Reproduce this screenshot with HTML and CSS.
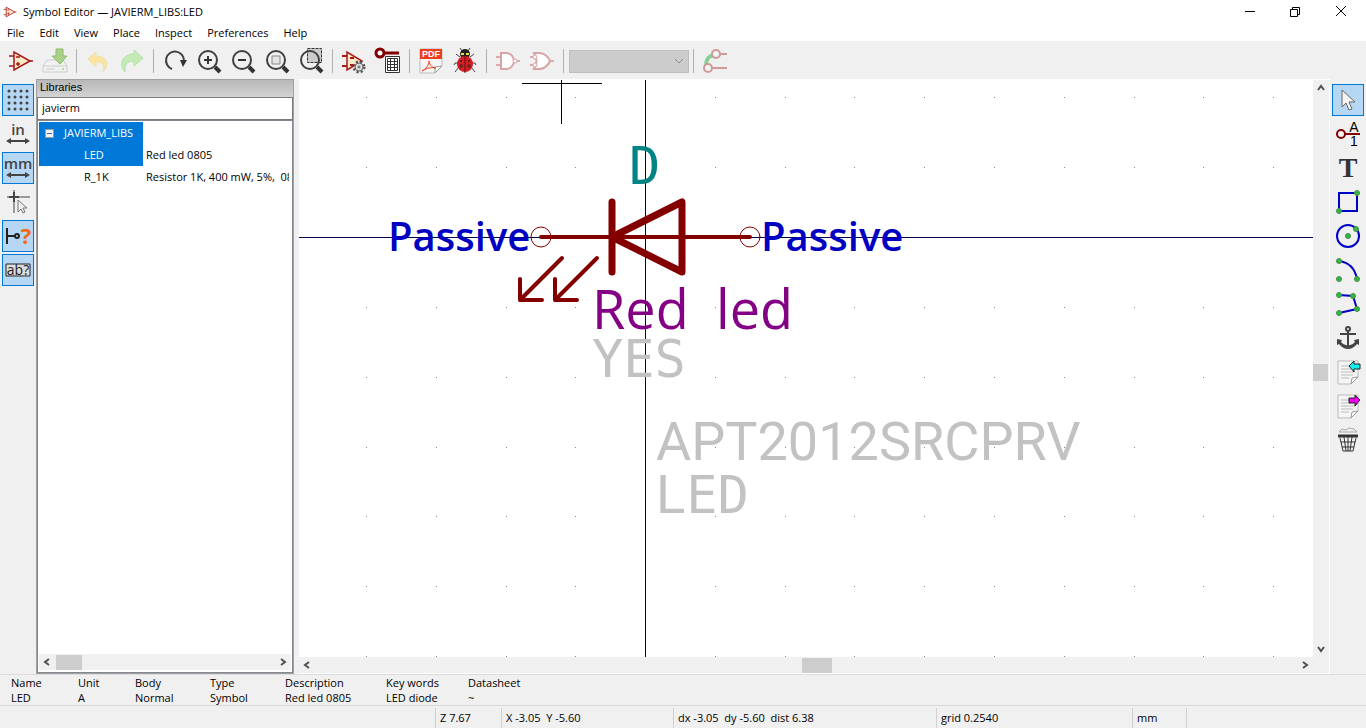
FILE: index.html
```
<!DOCTYPE html>
<html lang="en">
<head>
<meta charset="utf-8">
<title>Symbol Editor — JAVIERM_LIBS:LED</title>
<link rel="stylesheet" href="styles.css">
</head>
<body>
<svg class="defs" aria-hidden="true">
  <defs>
    <symbol id="opamp" viewBox="0 0 26 26"><path d="M6 4v18l16-9z" fill="#fbe9c8" stroke="#a81818" stroke-width="1.500"/><path d="M1 8h5M1 18h5M21 13h4M8 9h4M8 16h4M10 14v4" stroke="#a81818" stroke-width="1.500" fill="none"/></symbol>
    <symbol id="glass" viewBox="0 0 26 26"><circle cx="12" cy="12" r="9" fill="none" stroke="#404040" stroke-width="2"/><path d="M19 19l5 5" stroke="#333" stroke-width="4"/></symbol>
    <symbol id="undo" viewBox="0 0 26 26"><path d="M3 11l8-7v4c11 0 14 9 7 16 2-7 0-10-7-10v5z" fill="#fbe3a0" stroke="#f0dfae"/></symbol>
    <symbol id="up" viewBox="0 0 16 16"><path d="M5 10l3-4 3 4" fill="none" stroke="#505050" stroke-width="2"/></symbol>
    <symbol id="page" viewBox="0 0 26 26"><path d="M3 2h20v16l-7 7H3z" fill="#f5f5f5" stroke="#bbb"/><path d="M23 18l-7 7 1-6z" fill="#fff" stroke="#999"/><path d="M6 7h10M6 10h10M6 13h14M6 16h12M6 19h8" stroke="#bbb"/></symbol>
  </defs>
</svg>
<div class="window">
  <header class="titlebar">
    <svg class="app-icon"><use href="#opamp"/></svg>
    <span class="title">Symbol Editor — JAVIERM_LIBS:LED</span>
    <button class="win-btn" aria-label="Minimize"><svg width="12" height="12"><path d="M1 5h10v1H1z"/></svg></button>
    <button class="win-btn" aria-label="Restore"><svg width="12" height="12"><path d="M.5 3.500h7v7h-7zM2.500 3.500v-2h7v7h-2" fill="none" stroke="#000"/></svg></button>
    <button class="win-btn" aria-label="Close"><svg width="12" height="12"><path d="M0 0l10 10M10 0L0 10" fill="none" stroke="#000"/></svg></button>
  </header>
  <nav class="menubar">
    <button>File</button><button>Edit</button><button>View</button><button>Place</button><button>Inspect</button><button>Preferences</button><button>Help</button>
  </nav>
  <div class="toolbar" role="toolbar">
    <button aria-label="New symbol"><svg><use href="#opamp"/></svg></button>
    <button aria-label="Save"><svg viewBox="0 0 26 26"><path d="M5 12h16l4 6v6H1v-6z" fill="#f1f1f1" stroke="#ccc"/><path d="M1 18h24" stroke="#ccc"/><circle cx="21" cy="21" r="1" fill="#9d8"/><path d="M4 21h9" stroke="#ccc"/><path d="M14 1h7v7h4l-7 8-8-8h4z" fill="#a8d087" stroke="#8fbb70"/></svg></button>
    <span class="sep"></span>
    <button aria-label="Undo"><svg><use href="#undo"/></svg></button>
    <button aria-label="Redo"><svg viewBox="0 0 26 26"><path d="M24 10l-9-8v4C4 6-1 16 6 24c-1-7 2-11 9-11v5z" fill="#c4ebb5" stroke="#b5dfa8"/></svg></button>
    <span class="sep"></span>
    <button aria-label="Refresh"><svg viewBox="0 0 26 26"><path d="M10 21a9 9 0 1 1 12-8" fill="none" stroke="#404040" stroke-width="2"/><path d="M18 12h7l-4 7z" fill="#333"/></svg></button>
    <button aria-label="Zoom in"><svg viewBox="0 0 26 26"><use href="#glass"/><path d="M8 12h8M12 8v8" stroke="#333" stroke-width="2"/></svg></button>
    <button aria-label="Zoom out"><svg viewBox="0 0 26 26"><use href="#glass"/><path d="M8 12h8" stroke="#333" stroke-width="2"/></svg></button>
    <button aria-label="Zoom to fit"><svg viewBox="0 0 26 26"><use href="#glass"/><path d="M8 8h8v8H8z" fill="#e5e5e5" stroke="#888" stroke-width="1"/></svg></button>
    <button aria-label="Zoom to selection"><svg viewBox="0 0 26 26"><path d="M9.500 .5h14v14h-14z" fill="#ccc" stroke="#333" stroke-dasharray="3 1"/><use href="#glass"/></svg></button>
    <span class="sep"></span>
    <button aria-label="Symbol properties"><svg viewBox="0 0 26 26"><path d="M6 4v18l15-9z" fill="#fbe9c8" stroke="#a81818" stroke-width="1.500"/><path d="M1 8h5M1 18h5M9 10h4M9 17h4" stroke="#a81818" stroke-width="2"/><circle cx="18" cy="19" r="5" fill="#ddd" stroke="#555" stroke-width="3" stroke-dasharray="2 2"/><circle cx="18" cy="19" r="4" fill="#ddd" stroke="#666"/><circle cx="18" cy="19" r="1" fill="#fff" stroke="#555"/></svg></button>
    <button aria-label="Pin table"><svg viewBox="0 0 26 26"><path d="M9 5h15" stroke="#840000" stroke-width="3"/><circle cx="5" cy="5" r="4" fill="#fff" stroke="#840000" stroke-width="3"/><path d="M10.500 8.500h14v16h-14z" fill="#fff" stroke="#333"/><path d="M12.500 10.500h10v12h-10zM12.500 13.500h10M12.500 16.500h10M12.500 19.500h10M15.500 11v12M19.500 11v12" fill="none" stroke="#333"/></svg></button>
    <span class="sep"></span>
    <button aria-label="Datasheet"><svg viewBox="0 0 26 26"><path d="M2 1h22v17l-7 7H2z" fill="#f6f6f6" stroke="#bbb"/><path d="M2 1h22v10H2z" fill="#ec3d1d"/><path d="M24 18l-7 7v-6z" fill="#fff" stroke="#999"/><path d="M4 23c4-2 7-6 7-10 1 5 4 7 7 7-5-1-9 0-14 3z" fill="none" stroke="#ec3d1d"/><text class="pdf" x="13" y="9">PDF</text></svg></button>
    <button aria-label="Check symbol"><svg viewBox="0 0 26 26"><path d="M10 3L8 0M16 3l2-3M8 9L4 6M18 9l4-3M6 15H3l-1 2M20 15h3l1 2M7 19l-4 5M19 19l4 5" stroke="#444" fill="none"/><ellipse cx="13" cy="6" rx="5" ry="5" fill="#222"/><path d="M9 6h3M14 6h3" stroke="#ed4" stroke-width="2"/><ellipse cx="13" cy="16" rx="8" ry="8" fill="#d21f24"/><path d="M13 8v17" stroke="#611"/><circle cx="9" cy="13" r="1" fill="#322"/><circle cx="17" cy="13" r="1" fill="#322"/><circle cx="9" cy="18" r="2" fill="#722"/><circle cx="17" cy="18" r="2" fill="#722"/></svg></button>
    <span class="sep"></span>
    <button aria-label="Standard body style"><svg viewBox="0 0 26 26"><path d="M1 9h5M1 17h5M22 13h3" stroke="#dcaaaa" stroke-width="2"/><path d="M6 5h5a8 8 0 0 1 0 16H6z" fill="#fff" stroke="#d8a4a4" stroke-width="2"/><circle cx="20" cy="13" r="2" fill="#fff" stroke="#d8a4a4"/></svg></button>
    <button aria-label="Alternate body style"><svg viewBox="0 0 26 26"><path d="M1 9h3M1 17h3M21 13h4" stroke="#dcaaaa" stroke-width="2"/><path d="M5 5h6q7 1 10 8-3 7-10 8H5q5-8 0-16z" fill="#fff" stroke="#d8a4a4" stroke-width="2"/><circle cx="6" cy="9" r="2" fill="#fff" stroke="#d8a4a4"/><circle cx="6" cy="17" r="2" fill="#fff" stroke="#d8a4a4"/></svg></button>
    <span class="sep"></span>
    <select class="unit" aria-label="Unit" disabled><option></option></select>
    <svg class="unit-arrow" viewBox="0 0 12 12"><path d="M2 4l4 4 4-4" fill="none" stroke="#909090"/></svg>
    <span class="sep"></span>
    <button aria-label="Synchronized pins"><svg viewBox="0 0 26 26"><path d="M4 18c0-7 2-10 8-11" fill="none" stroke="#86cf96" stroke-width="4"/><path d="M17 6h8M9 20h16" stroke="#d09898" stroke-width="2"/><circle cx="14" cy="6" r="4" fill="#f4f4f4" stroke="#d09898" stroke-width="2"/><circle cx="6" cy="20" r="4" fill="#f4f4f4" stroke="#d09898" stroke-width="2"/></svg></button>
  </div>

  <main class="main">
    <div class="side" role="toolbar">
      <button class="on" aria-label="Show grid"><svg viewBox="0 0 26 26"><path d="M4 4h19M4 10h19M4 16h19M4 22h19" stroke="#444" stroke-width="3" stroke-linecap="round" stroke-dasharray="0 6"/></svg></button>
      <button aria-label="Inches"><svg viewBox="0 0 26 26"><text class="glyph" x="13" y="14">in</text><path d="M3 20h20" stroke="#444" stroke-width="2"/><path d="M1 20l5-3v6zM25 20l-5-3v6z" fill="#444"/></svg></button>
      <button class="on" aria-label="Millimetres"><svg viewBox="0 0 26 26"><text class="glyph" x="13" y="14">mm</text><path d="M3 20h20" stroke="#444" stroke-width="2"/><path d="M1 20l5-3v6zM25 20l-5-3v6z" fill="#444"/></svg></button>
      <button aria-label="Cursor shape"><svg viewBox="0 0 26 26"><path d="M2 8h23M9 1v24" stroke="#999" stroke-width="2" stroke-dasharray="11 1"/><path d="M4 8h10M9 3v10" stroke="#444" stroke-width="2"/><path d="M13 11v12l3-3 2 4 2-1-2-4h4z" fill="#eee" stroke="#777"/></svg></button>
      <button class="on" aria-label="Pin electrical type"><svg viewBox="0 0 26 26"><path d="M2 5v16M2 13h8" stroke="#222" stroke-width="2"/><circle cx="12" cy="13" r="2" fill="#b5d7f3" stroke="#222" stroke-width="2"/><text class="question" x="21" y="21">?</text></svg></button>
      <button class="on" aria-label="Hidden text"><svg viewBox="0 0 26 26"><path d="M1 7h24v12H1z" fill="#ddd" stroke="#222" stroke-width="1"/><text class="abc" x="13" y="18">ab?</text></svg></button>
    </div>

    <section class="panel">
      <h2 class="caption">Libraries</h2>
      <input class="search" type="text" value="javierm" aria-label="Search libraries">
      <div class="tree">
        <div class="rows">
          <div class="row sel root"><span class="name"><span class="toggle"></span>JAVIERM_LIBS</span></div>
          <div class="row sel"><span class="name">LED</span><span class="desc">Red led 0805</span></div>
          <div class="row"><span class="name">R_1K</span><span class="desc">Resistor 1K, 400 mW, 5%,&nbsp; 0805</span></div>
        </div>
        <div class="hscroll">
          <svg class="left"><use href="#up"/></svg><span class="thumb tree-thumb"></span><svg class="right"><use href="#up"/></svg>
        </div>
      </div>
    </section>

    <section class="editor">
      <svg class="sheet">
        <rect class="axis" x="346" y="0" width="1" height="100%"/>
        <rect class="axis" x="0" y="157" width="100%" height="1"/>
        <g transform="translate(346 157)">
          <path id="dots" class="dots" d="M-279 0h1v1h-1zM-209 0h1v1h-1zM-139 0h1v1h-1zM-70 0h1v1h-1zM70 0h1v1h-1zM140 0h1v1h-1zM209 0h1v1h-1zM279 0h1v1h-1zM349 0h1v1h-1zM419 0h1v1h-1zM489 0h1v1h-1zM558 0h1v1h-1zM628 0h1v1h-1z" transform="translate(0 -140)"/>
          <use href="#dots" y="70"/><use href="#dots" y="210"/><use href="#dots" y="280"/><use href="#dots" y="350"/><use href="#dots" y="419"/><use href="#dots" y="489"/><use href="#dots" y="559"/>
          <path class="cursor" d="M-123-154h80v1h-80zM-84-157h1v44h-1z"/>
          <g class="symbol">
            <path class="pin" d="M-104 0H105"/>
            <path class="body" d="M-33-35V35M37-35V35L-33 0z"/>
            <circle cx="-104" cy="0" r="10"/><circle cx="105" cy="0" r="10"/>
            <path class="pin" d="M-83 21L-125 63M-125 42V63H-103M-48 21L-90 63M-90 42V63H-68"/>
          </g>
          <text class="pin-type" x="-257" y="14">Passive</text>
          <text class="pin-type" x="116" y="14">Passive</text>
          <text class="field mono ref" x="-16" y="-53">D</text>
          <text class="field value" x="-53" y="92">Red <tspan x="71">led</tspan></text>
          <text class="field mono hidden-field" x="-53" y="140">YES</text>
          <text class="field part hidden-field" x="11" y="223">APT2012SRCPRV</text>
          <text class="field mono hidden-field" x="10" y="276">LED</text>
        </g>
      </svg>
      <div class="vscroll"><svg><use href="#up"/></svg><span class="thumb v-thumb"></span><svg class="down"><use href="#up"/></svg></div>
      <div class="hscroll"><svg class="left"><use href="#up"/></svg><span class="thumb sheet-thumb"></span><svg class="right"><use href="#up"/></svg></div>
      <div class="corner"></div>
    </section>

    <div class="side" role="toolbar">
      <button class="on" aria-label="Select"><svg viewBox="0 0 26 26"><path d="M7 3v17l4-4 3 7 3-1-3-7h6z" fill="#f4f4f4" stroke="#666"/></svg></button>
      <button aria-label="Add pin"><svg viewBox="0 0 26 26"><path d="M9 13h16" stroke="#840000" stroke-width="2"/><circle cx="6" cy="13" r="4" fill="#f4f4f4" stroke="#840000" stroke-width="2"/><text class="tiny" x="19" y="11">A</text><text class="tiny" x="19" y="25">1</text></svg></button>
      <button aria-label="Add text"><svg viewBox="0 0 26 26"><text class="tee" x="13" y="22">T</text></svg></button>
      <button aria-label="Add rectangle"><svg viewBox="0 0 26 26"><path d="M4 4h18v18H4z" class="blue"/><circle cx="22" cy="4" r="2.500" class="node"/><circle cx="4" cy="22" r="2.500" class="node"/></svg></button>
      <button aria-label="Add circle"><svg viewBox="0 0 26 26"><circle cx="13" cy="13" r="11" class="blue"/><circle cx="13" cy="13" r="2.500" class="node"/><circle cx="21" cy="6" r="2.500" class="node"/></svg></button>
      <button aria-label="Add arc"><svg viewBox="0 0 26 26"><path d="M4 4q15 2 18 18" class="blue"/><circle cx="4" cy="4" r="2.500" class="node"/><circle cx="4" cy="22" r="2.500" class="node"/><circle cx="22" cy="22" r="2.500" class="node"/></svg></button>
      <button aria-label="Add lines"><svg viewBox="0 0 26 26"><path d="M4 4l14 1 4 13-18 4" class="blue"/><circle cx="4" cy="4" r="2.500" class="node"/><circle cx="18" cy="5" r="2.500" class="node"/><circle cx="22" cy="18" r="2.500" class="node"/><circle cx="4" cy="22" r="2.500" class="node"/></svg></button>
      <button aria-label="Move anchor"><svg viewBox="0 0 26 26"><circle cx="13" cy="4" r="2" fill="none" stroke="#444" stroke-width="2"/><path d="M13 6v16M5 9h16" stroke="#444" stroke-width="2"/><path d="M2 14l5 1-1 2q3 4 7 3 4 1 7-3l-1-2 5-1v6l-2-1q-4 5-9 5t-9-5l-2 1z" fill="#444"/></svg></button>
      <button aria-label="Import drawing"><svg viewBox="0 0 26 26"><use href="#page"/><path d="M14 7l5-5v3h6v5h-6v3z" fill="#1ee" stroke="#222"/></svg></button>
      <button aria-label="Export drawing"><svg viewBox="0 0 26 26"><use href="#page"/><path d="M25 7l-5-5v3h-6v5h6v3z" fill="#e0e" stroke="#222"/></svg></button>
      <button aria-label="Delete"><svg viewBox="0 0 26 26"><path d="M4 5l3-3 4 1 3-2 5 1 3 3z" fill="#eee" stroke="#aaa"/><path d="M3 9h20" stroke="#333" stroke-width="3"/><path d="M5 11l3 13h10l3-13M9 10l2 14M13 10v14M17 10l-2 14M6 15h14M7 20h12" fill="none" stroke="#333" stroke-width="1"/></svg></button>
    </div>
  </main>

  <dl class="info">
    <div><dt>Name</dt><dd>LED</dd></div>
    <div><dt>Unit</dt><dd>A</dd></div>
    <div><dt>Body</dt><dd>Normal</dd></div>
    <div><dt>Type</dt><dd>Symbol</dd></div>
    <div><dt>Description</dt><dd>Red led 0805</dd></div>
    <div><dt>Key words</dt><dd>LED diode</dd></div>
    <div><dt>Datasheet</dt><dd>~</dd></div>
  </dl>
  <footer class="status">
    <span></span><span>Z 7.67</span><span>X -3.05&nbsp; Y -5.60</span><span>dx -3.05&nbsp; dy -5.60&nbsp; dist 6.38</span><span>grid 0.2540</span><span>mm</span><span></span>
  </footer>
</div>
</body>
</html>
```
FILE: styles.css
```
* { box-sizing: border-box; }
body { margin: 0; background: #f0f0f0; color: #000; font: 11px/15px "Open Sans", "Noto Sans", sans-serif; }
button { border: 0; padding: 0; background: none; font: inherit; color: inherit; }
svg { display: block; flex: none; }
.defs { position: absolute; width: 0; height: 0; }

.window { display: flex; flex-direction: column; height: 100vh; overflow: hidden; }

.titlebar { display: flex; align-items: center; height: 23px; background: #fff; padding-left: 3px; }
.app-icon { width: 14px; height: 16px; margin-right: 6px; }
.title { flex: 1; }
.win-btn { width: 46px; height: 22px; display: flex; align-items: center; justify-content: center; padding-right: 2px; }

.menubar { display: flex; height: 18px; background: #fff; gap: 15px; padding-left: 7px; }
.menubar button { height: 18px; }

.toolbar { display: flex; align-items: center; height: 38px; padding: 2px 0 0 4px; }
.toolbar button { width: 34px; height: 34px; display: grid; place-items: center; }
.toolbar button svg, .side button svg { width: 26px; height: 26px; overflow: visible; }
.sep { width: 1px; height: 24px; margin: 0 4px; background: #b0b0b0; }
.unit { appearance: none; width: 120px; height: 23px; margin-left: 1px; border: 1px solid #bfbfbf; border-radius: 0; background: #ccc; opacity: 1; }
.unit-arrow { width: 12px; height: 12px; margin-left: -16px; margin-right: 4px; }
.pdf { font: 700 9px "Liberation Sans", sans-serif; fill: #fff; text-anchor: middle; }

.main { display: flex; flex: 1; min-height: 0; }
.side { display: flex; flex-direction: column; gap: 2px; width: 36px; padding: 5px 2px 0; }
.side button { width: 32px; height: 32px; display: grid; place-items: center; border: 1px solid transparent; }
.side .on { background: #b5d7f3; border-color: #0078d7; }
.glyph { font: 600 15px "Open Sans", sans-serif; fill: #444; text-anchor: middle; }
.question { font: 700 22px "Open Sans", sans-serif; fill: #f06a10; text-anchor: middle; }
.abc { font: 14px "Open Sans", sans-serif; fill: #222; text-anchor: middle; }
.tiny { font: 14px "Liberation Sans", sans-serif; text-anchor: middle; }
.tee { font: 700 28px "Liberation Serif", serif; fill: #333; text-anchor: middle; }
.blue { fill: none; stroke: #0000c8; stroke-width: 2px; }
.node { fill: #2db93d; stroke: #4b8c50; }

.panel { display: flex; flex-direction: column; width: 258px; border: 1px solid #a0a0a0; margin-right: 5px; }
.caption { margin: 0; height: 17px; padding-left: 3px; font: 11px/15px "Liberation Sans", sans-serif; background: linear-gradient(#b8b8b8, #d2d2d2); }
.search { height: 23px; border: 1px solid #7a7a7a; padding: 0 4px 2px; font: inherit; background: #fff; color: inherit; }
.tree { display: flex; flex-direction: column; flex: 1; min-height: 0; border: 1px solid #828790; padding: 1px 1px 2px; background: #fff; }
.rows { flex: 1; overflow: hidden; }
.row { display: flex; height: 22px; line-height: 21px; white-space: nowrap; }
.name { flex: none; display: flex; width: 104px; padding-left: 45px; }
.root .name { padding-left: 6px; }
.sel .name { background: #0078d7; color: #fff; }
.desc { padding-left: 3px; margin-right: 2px; overflow: hidden; }
.toggle { align-self: center; width: 9px; height: 9px; margin-right: 10px; border: 1px solid #999; background: linear-gradient(#4b63a7, #4b63a7) center / 5px 1px no-repeat #f4f4f4; }

.hscroll { display: flex; align-items: center; height: 16px; background: #f0f0f0; }
.hscroll svg, .vscroll svg { width: 16px; height: 16px; }
.left { transform: rotate(-90deg); }
.right { transform: rotate(90deg); margin-left: auto; }
.down { transform: rotate(180deg); margin-top: auto; }
.thumb { background: #cdcdcd; }
.tree-thumb { width: 26px; height: 15px; margin-left: 1px; }
.sheet-thumb { width: 3%; height: 15px; margin-left: 48%; }
.v-thumb { width: 15px; height: 17px; margin-top: 268px; }

.editor { display: grid; grid-template: 1fr 17px / 1fr 16px; flex: 1; min-width: 0; padding-top: 1px; border-right: 1px solid #fff; background: #fff; }
.sheet { width: 100%; height: 100%; background: #fff; }
.vscroll { display: flex; flex-direction: column; background: #f0f0f0; }
.corner { background: #f0f0f0; height: 16px; }
.axis { fill: #000048; }
.dots { fill: #888; }
.symbol { fill: none; stroke: #840000; stroke-linecap: round; stroke-linejoin: round; }
.pin { stroke-width: 4px; }
.body { stroke-width: 7px; }
.pin-type { font: 600 40px "Open Sans", sans-serif; fill: #0000c2; }
.field { font: 54px "Open Sans", sans-serif; }
.mono { font: 52px "DejaVu Sans Mono", monospace; }
.part { font: 400 54px Roboto, sans-serif; }
.ref { fill: #008484; }
.value { fill: #840084; }
.hidden-field { fill: #c2c2c2; }

.info { display: grid; grid-template-columns: 67px 57px 75px 75px 101px 82px 1fr; height: 32px; margin: 0; padding: 0 11px; border-top: 1px solid #dcdcdc; border-bottom: 1px solid #d8d8d8; }
dd { margin: 0; }
.status { display: grid; grid-template-columns: 435px 66px 172px 263px 196px 54px 1fr; height: 22px; padding-top: 2px; }
.status span { padding-left: 4px; line-height: 19px; border-left: 1px solid #d0d0d0; white-space: nowrap; }
.status span:first-child { border: 0; }
```
